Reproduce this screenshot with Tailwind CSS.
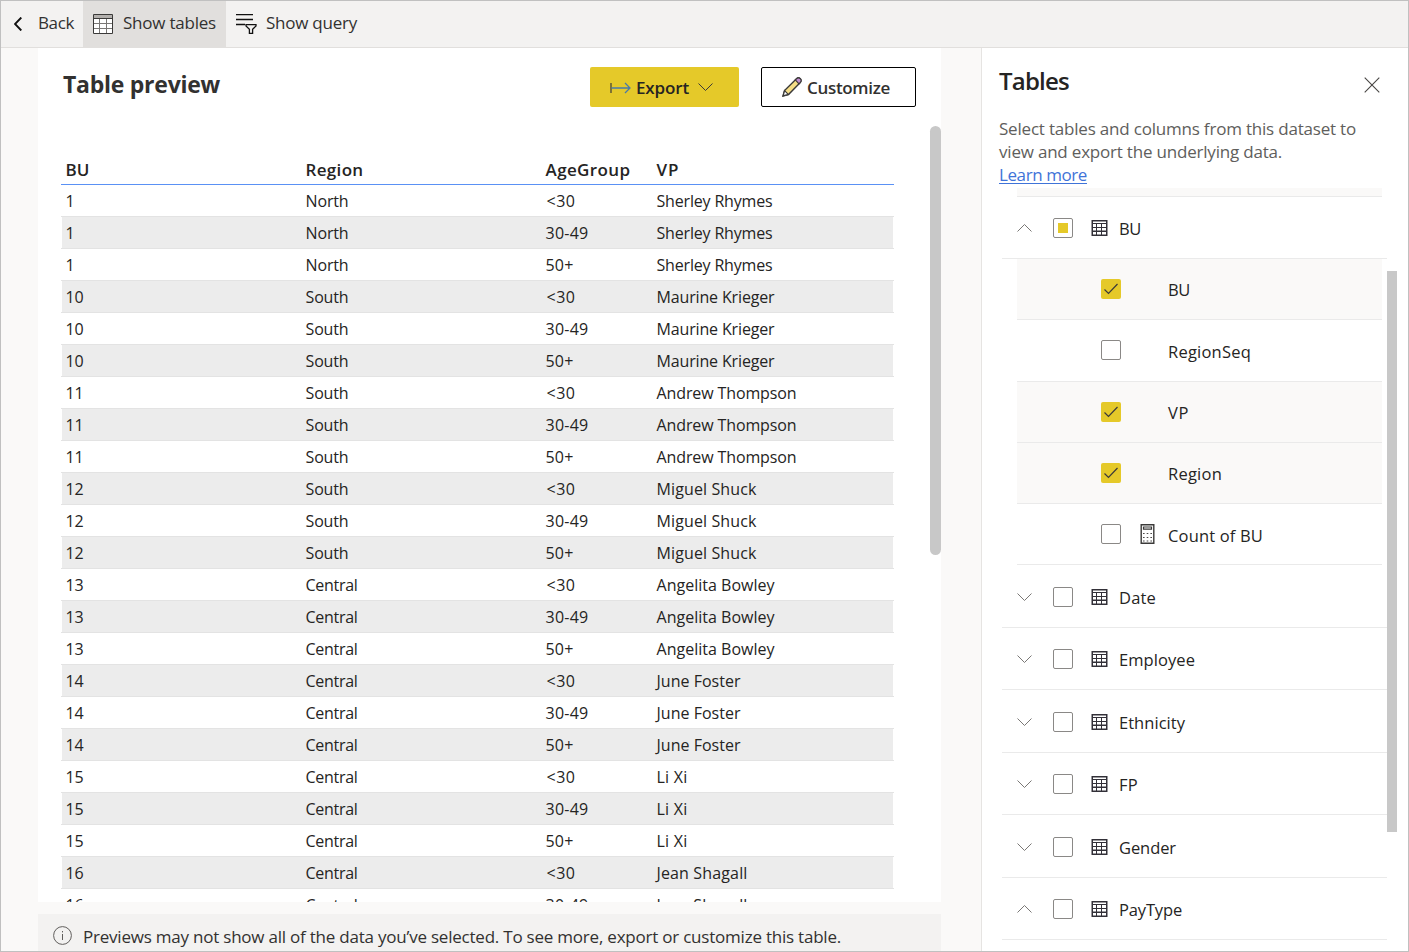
<!DOCTYPE html>
<html lang="en">
<head>
<meta charset="utf-8">
<title>Table preview</title>
<script src="https://cdn.jsdelivr.net/npm/@tailwindcss/browser@4"></script>
</head>
<body class="h-[952px] w-[1409px] overflow-hidden font-['Open_Sans','Noto_Sans',sans-serif] text-[#252423]">
<svg class="hidden">
  <symbol id="grid" viewBox="0 0 17 16"><path d="M.5 0h16v16H.5z" fill="#323038"/><path d="M2 1.600h13v1.400H2zM2 4h3v3H2zM6 4h4v3H6zM11 4h4v3h-4zM2 8h3v2.600H2zM6 8h4v2.600H6zM11 8h4v2.600h-4zM2 12h3v2.600H2zM6 12h4v2.600H6zM11 12h4v2.600h-4z" fill="#fff"/></symbol>
  <symbol id="down" viewBox="0 0 15 8"><path d="M.5.5l7 7 7-7" fill="none" stroke="currentColor"/></symbol>
  <symbol id="up" viewBox="0 0 15 8"><path d="M.5 7.500l7-7 7 7" fill="none" stroke="currentColor"/></symbol>
  <symbol id="calc" viewBox="0 0 15 20"><path d="M1.200.7h12.600v18.600H1.200z" fill="#fff" stroke="#3b3a39" stroke-width="1.400"/><path d="M3.500 3h8v2.200h-8z" fill="#fff" stroke="#3b3a39" stroke-width="1.200"/><path d="M3 9.500h9M3 13.500h9M3 17h9" stroke="#4d4b4a" stroke-width="1.200" stroke-dasharray="1.600 2.100"/></symbol>
</svg>
<div class="flex h-full flex-col border border-[#c0c0c0] bg-[#faf9f8]">
  <header class="flex h-[47px] shrink-0 border-b border-[#e1dfdd] bg-[#f3f2f1] text-[17px] text-[#323130]">
    <div class="flex h-[46px] w-[82px] items-center pl-[13px] pb-0.5">
      <svg class="mt-0.5 mr-4 h-[14px] w-2 shrink-0" viewBox="0 0 8 14"><path d="M7.300.5L1 7l6.300 6.500" fill="none" stroke="#111" stroke-width="1.900"/></svg>
      <span data-w="36">Back</span>
    </div>
    <div class="flex h-[46px] w-[143px] items-center bg-[#e1dfdd] pl-[10px] pb-0.5">
      <svg class="mt-px mr-[10px] size-5 shrink-0" viewBox="0 0 20 20"><path d="M.5.5h19v19H.5z" fill="#fff" stroke="#3b3a39"/><path d="M1 1h18v3H1z" fill="#b3b0ad"/><path d="M1 4.500h18" stroke="#3b3a39"/><path d="M1 9.500h18M1 14.500h18M6.500 5v14M13.500 5v14" stroke="#797775"/></svg>
      <span data-w="93">Show tables</span>
    </div>
    <div class="flex items-center pl-[10px] pb-0.5">
      <svg class="mt-px mr-[9px] h-5 w-[21px] shrink-0" viewBox="0 0 21 20"><path d="M0 .5h17M0 5.500h17M0 10.500h9" stroke="#111" stroke-width="1.400"/><path d="M10 10.700h10v1.300l-3.400 3.300v4.100h-3.200v-4.100L10 12z" fill="none" stroke="#111" stroke-width="1.300"/></svg>
      <span data-w="91">Show query</span>
    </div>
  </header>
  <div class="flex min-h-0 flex-1">
    <main class="relative ml-[37px] flex w-[903px] shrink-0 flex-col">
      <section class="h-[854px] shrink-0 overflow-hidden bg-white">
        <div class="flex h-[108px] items-start pt-[19px] pl-[25px]">
          <h1 class="w-[527px] pt-px text-[23px] leading-8 font-bold text-[#323130]"><span data-w="157">Table preview</span></h1>
          <button class="flex h-10 w-[149px] items-center rounded-xs bg-[#e5c929] pt-px pl-5 text-[17px] font-semibold">
            <svg class="mr-[5px] h-3 w-[21px] shrink-0" viewBox="0 0 21 12" fill="none"><path d="M1 1v10" stroke="#3b3a39" stroke-width="1.200"/><path d="M1.500 6H20M15 1l5 5-5 5" stroke="#4a7aa8" stroke-width="1.300"/></svg>
            <span data-w="53">Export</span>
            <svg class="-mt-0.5 ml-[9px] h-2 w-[15px] shrink-0 text-[#3b3a39]"><use href="#down"/></svg>
          </button>
          <button class="ml-[22px] flex h-10 w-[155px] items-center rounded-xs border border-black bg-white pt-px pl-5 text-[17px] font-semibold text-[#323130]">
            <svg class="mr-[5px] mb-0.5 size-5 shrink-0" viewBox="0 0 20 20"><path d="M1 19l1.500-5.500L14.500 1.700a2.600 2.600 0 0 1 3.800 3.800L6.500 17.500z" fill="#f5dd86" stroke="#3b3a39" stroke-width="1.400"/><path d="M13.300 2.900l1.300-1.200a2.600 2.600 0 0 1 3.700 3.700l-1.300 1.400z" fill="#c28bd0" stroke="#3b3a39" stroke-width="1.200"/><path d="M1.100 18.900l1.500-5.200 3.700 3.700z" fill="#fff" stroke="#3b3a39" stroke-width="1.200"/></svg>
            <span data-w="83">Customize</span>
          </button>
        </div>
        <div class="ml-[23px] w-[833px] text-[16px]">
          <div class="flex h-[29px] border-b border-[#5a91f5] pl-[4.500px] text-[17px] leading-[28px] font-semibold">
            <div class="w-60"><span data-w="24">BU</span></div><div class="w-60"><span data-w="58">Region</span></div><div class="w-[111px]"><span data-w="85">AgeGroup</span></div><div><span data-w="23">VP</span></div>
          </div>
          <div id="rows"></div>
        </div>
      </section>
      <div class="absolute top-[78px] right-0 h-[429px] w-[11px] rounded-full bg-[#c8c8c8]"></div>
      <footer class="mt-3 flex h-[37px] items-start bg-[#f3f2f1] pt-[10px] pl-[15px] text-[17px] text-[#323130]">
        <svg class="mt-0.5 mr-[11px] size-[19px] shrink-0" viewBox="0 0 19 19" fill="none" stroke="#605e5c"><circle cx="9.500" cy="9.500" r="8.900"/><path d="M9.500 8v6M9.500 5v1.400"/></svg>
        <span class="leading-[25px]" data-w="758">Previews may not show all of the data you’ve selected. To see more, export or customize this table.</span>
      </footer>
    </main>
    <aside class="relative ml-10 min-w-0 flex-1 border-l border-[#e6e4e2] bg-white">
      <div class="flex h-[140px] justify-between pr-7 pl-[17px]">
        <div>
          <h2 class="pt-[15px] text-[24px] leading-9 font-semibold"><span data-w="70">Tables</span></h2>
          <p class="pt-[18px] text-[17px] leading-[23px] text-[#605e5c]"><span data-w="357">Select tables and columns from this dataset to</span><br><span data-w="283">view and export the underlying data.</span><br><a class="text-[#3f73d8] underline underline-offset-2" data-w="88">Learn more</a></p>
        </div>
        <svg class="mt-[29px] size-4 shrink-0" viewBox="0 0 16 16"><path d="M.7.700l14.600 14.600M15.300.7L.7 15.300" stroke="#484644" stroke-width="1.100"/></svg>
      </div>
      <div class="ml-[35px] h-[9px] w-[365px] border-b border-[#eaeaea] bg-[#faf9f8]"></div>
      <div id="tree" class="text-[16.500px]"></div>
      <div class="absolute top-[223px] right-[11px] h-[561px] w-[10px] bg-[#c8c8c8]"></div>
    </aside>
  </div>
</div>
<script>
const vps = [['1','North','Sherley Rhymes',116],['10','South','Maurine Krieger',118],['11','South','Andrew Thompson',140],['12','South','Miguel Shuck',100],['13','Central','Angelita Bowley',118],['14','Central','June Foster',84],['15','Central','Li Xi',31],['16','Central','Jean Shagall',91]];
const ages = [['<30',29,'pl-px'],['30-49',43,''],['50+',28,'']];
let html = '', i = 0;
for (const [bu, region, vp, w] of vps) for (const [age, aw, pad] of ages) {
  html += `<div class="h-8 border-b border-[#e3e3e3] px-px"><div class="flex h-[31px] pl-[3.500px] leading-8 ${i++ % 2 ? 'bg-[#ececec]' : ''}">
    <div class="w-60"><span data-w="${bu.length * 9}">${bu}</span></div><div class="w-60"><span data-w="${region === 'Central' ? 52 : 43}">${region}</span></div><div class="w-[111px] ${pad}"><span data-w="${aw}">${age.replace('<', '&lt;')}</span></div><div><span data-w="${w}">${vp}</span></div></div></div>`;
}
document.getElementById('rows').innerHTML = html;

const check = '<svg class="size-5" viewBox="0 0 20 20"><path d="M3.500 10.500l4 4 9-9.500" fill="none" stroke="#3b3a39" stroke-width="1.200"/></svg>';
const box = s => s === 2 ? `<div class="size-5 shrink-0 rounded-xs bg-[#e5c929]">${check}</div>`
  : `<div class="flex size-5 shrink-0 items-center justify-center rounded-xs border border-[#8a8886] bg-white">${s ? '<div class="size-[10px] bg-[#e5c929]"></div>' : ''}</div>`;
const table = (name, w, dir, s, h, pt) => `<div class="ml-5 flex w-[385px] items-start border-b border-[#eaeaea] pl-[15px] ${h} ${pt}">
  <svg class="mt-1.5 mr-[21px] h-2 w-[15px] shrink-0 text-[#797775]"><use href="#${dir}"/></svg>${box(s)}
  <svg class="mt-0.5 mr-[11px] ml-[18px] h-4 w-[17px] shrink-0"><use href="#grid"/></svg><span class="leading-[22px]" data-w="${w}">${name}</span></div>`;
const column = (name, w, s, h, calc) => `<div class="ml-[35px] flex w-[365px] items-start border-b border-[#eaeaea] pt-5 pl-[84px] ${h} ${s ? 'bg-[#faf9f8]' : ''}">${box(s)}
  <div class="w-[47px] shrink-0 pl-[19px]">${calc ? '<svg class="h-5 w-[15px]"><use href="#calc"/></svg>' : ''}</div><span class="${s ? 'leading-[22px]' : 'leading-6'}" data-w="${w}">${name}</span></div>`;
document.getElementById('tree').innerHTML =
  table('BU', 22, 'up', 1, 'h-[62px]', 'pt-[21px]') +
  column('BU', 22, 2, 'h-[61px]') + column('RegionSeq', 83, 0, 'h-[62px]') + column('VP', 21, 2, 'h-[61px]') +
  column('Region', 54, 2, 'h-[61px]') + column('Count of BU', 95, 0, 'h-[61px]', true) +
  table('Date', 37, 'down', 0, 'h-[63px]', 'pt-[22px]') + table('Employee', 76, 'down', 0, 'h-[62px]', 'pt-[21px]') +
  table('Ethnicity', 66, 'down', 0, 'h-[63px]', 'pt-[22px]') + table('FP', 19, 'down', 0, 'h-[62px]', 'pt-[21px]') +
  table('Gender', 57, 'down', 0, 'h-[63px]', 'pt-[22px]') + table('PayType', 63, 'up', 0, 'h-[62px]', 'pt-[21px]');

const labels = [...document.querySelectorAll('[data-w]')];
function fit() {
  for (const el of labels) { el.style.whiteSpace = 'nowrap'; el.style.letterSpacing = '0px'; }
  const widths = labels.map(el => el.getBoundingClientRect().width);
  labels.forEach((el, n) => { el.style.letterSpacing = (el.dataset.w - widths[n]) / el.textContent.length + 'px'; });
}
fit();
addEventListener('load', fit);
document.fonts.ready.then(fit);
new ResizeObserver(fit).observe(document.body);
</script>
</body>
</html>
